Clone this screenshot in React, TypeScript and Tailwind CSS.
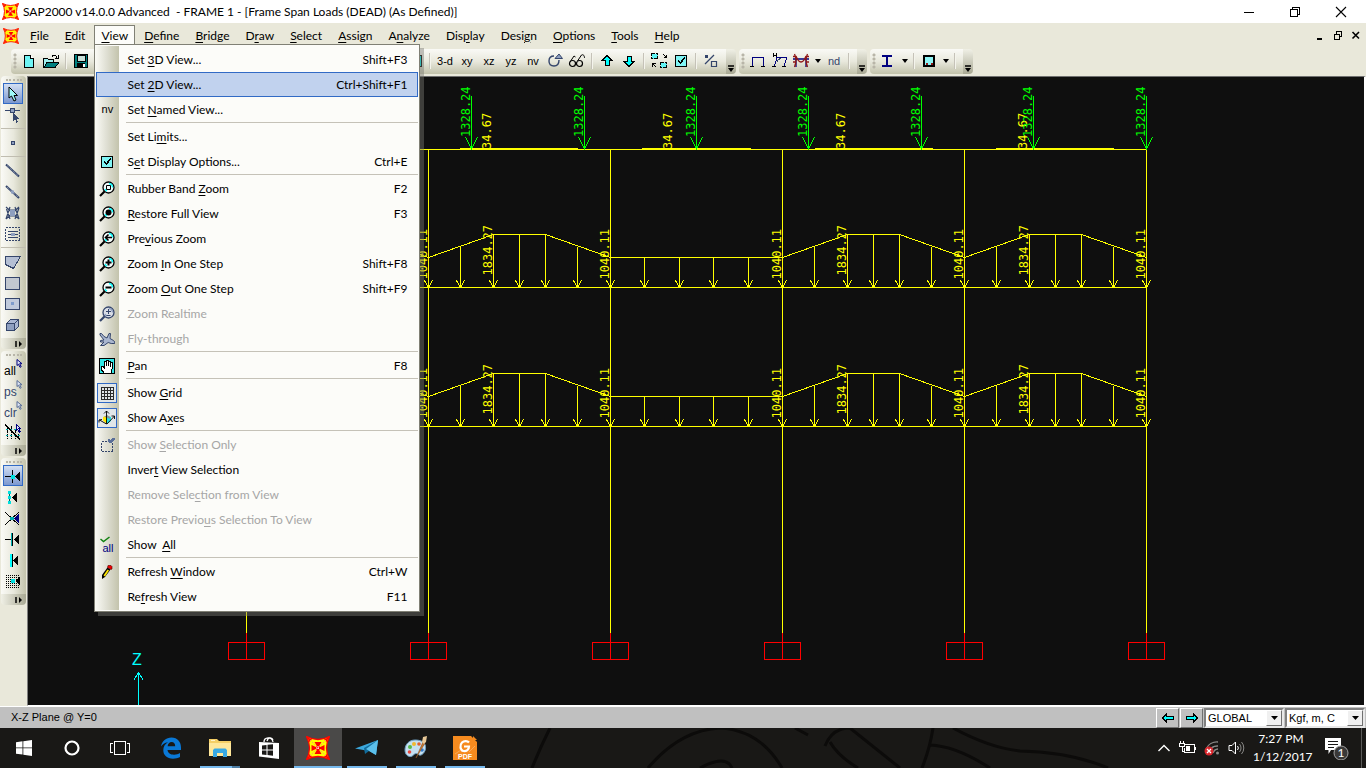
import { Fragment, ReactNode, useState } from 'react';

/* ---------- small helpers ---------- */

// "&" marks the accelerator letter
function Accel({ label }: { label: string }) {
  const i = label.indexOf('&');
  if (i < 0) return <>{label}</>;
  return (
    <>
      {label.slice(0, i)}
      <u className="underline underline-offset-2">{label[i + 1]}</u>
      {label.slice(i + 2)}
    </>
  );
}

function Svg({ size = 16, children }: { size?: number; children: ReactNode }) {
  return (
    <svg width={size} height={size} viewBox="0 0 16 16" fill="none" shapeRendering="crispEdges" className="shrink-0">
      {children}
    </svg>
  );
}

function SapLogo({ size = 16 }: { size?: number }) {
  return (
    <svg width={size} height={size} viewBox="0 0 24 24" className="shrink-0">
      <path d="M.5.5Q12 6.500 23.500.5Q17.500 12 23.500 23.500Q12 17.500 .5 23.500Q6.500 12 .5.5z" fill="#ffff00" stroke="#ff0000" strokeWidth="1.300" />
      <path d="M1 1l5 2.500L3.500 6zM23 1l-5 2.500L20.500 6zM1 23l5-2.500L3.500 18zM23 23l-5-2.500 2.500-2.500z" fill="#ff0000" />
      <path d="M8.500 6h7L12 12zM8.500 18h7L12 12zM5.500 9v6l6.500-3zM18.500 9v6L12 12z" fill="#ff0000" />
      <path d="M10 10h4v4h-4z" fill="#ff0000" />
      <path d="M4 4l16 16M20 4L4 20" stroke="#ff9070" strokeWidth="1" strokeDasharray="1.500 1.500" />
      <path d="M12 10v4M10 12h4" stroke="#fff" strokeWidth="1" strokeDasharray="1 1" />
    </svg>
  );
}

/* ---------- icons ---------- */

const NAVY = '#00007f';
const STEEL = '#34456b';
const SOFT = '#8e9fc0';

function Lens({ children, dim }: { children?: ReactNode; dim?: boolean }) {
  const c = dim ? STEEL : '#000';
  return (
    <svg width={16} height={16} viewBox="0 0 16 16" fill="none" className="shrink-0">
      <circle cx="9.500" cy="6.500" r="5.500" fill={dim ? '#d9dde6' : '#f4fbfa'} stroke={c} strokeWidth="1.300" />
      <path d="M10 2.500a4 4 0 0 1 3.500 4M6 8a4 4 0 0 0 2 2.200" stroke={dim ? SOFT : '#00ffff'} strokeWidth="1.300" />
      <path d="M5.500 10.500L1 15" stroke={c} strokeWidth="2.200" />
      {children}
    </svg>
  );
}

const checkBoxIcon = (
  <Svg>
    <rect x="3" y="3" width="11" height="11" fill="#7ff4f4" />
    <path d="M2.500 2.500h11v11h-11z" stroke="#000" />
    <path d="M5 7h1v1h1v1h1V7h1V6h1V5h1V4h1v2h-1v1h-1v2H9v1H8v1H7v-1H6V9H5z" fill="#000" />
  </Svg>
);

const nvIcon = <span className="font-['Liberation_Sans'] text-[11px] text-black">nv</span>;

const planeIcon = (
  <svg width={16} height={16} viewBox="0 0 16 16" className="shrink-0">
    <path
      d="M1 2.500h1.500L5 5.500 8 7l2-4.500h1.500L11 7.500l3.500 2 1.200 1.500v1.500h-3.500l-3-1L5 14.500H1.500L5 11H1.500V9.500L5 9 1 4z"
      fill="#a9b6cf"
      stroke={STEEL}
      strokeWidth="1"
    />
  </svg>
);

const handIcon = (
  <Svg>
    <rect x="0" y="0" width="16" height="16" fill="#000" />
    <rect x="1" y="1" width="14" height="14" fill="#30e8e8" />
    <path d="M5 15L2 11V8h1.500L5 9.500V3h2V2h2v1h2v1h2v7l-1 4z" fill="#fff" stroke="#000" strokeWidth="1" />
    <path d="M7 3v5M9 3v5M11 4v5" stroke="#000" strokeWidth="1" />
  </Svg>
);

const gridIcon = (
  <Svg>
    <path d="M2.500 2v12M5.500 2v12M8.500 2v12M11.500 2v12M14.500 2v12M2 2.500h13M2 5.500h13M2 8.500h13M2 11.500h13M2 14.500h13" stroke="#2a2a2a" />
  </Svg>
);

const axesIcon = (
  <svg width={18} height={18} viewBox="0 0 18 18" fill="none" className="shrink-0">
    <path d="M5 8l4-1.500V15l-4-3.500z" fill="#ffe800" />
    <path d="M9 6.500l4 1.500v4L9 15z" fill="#20e0e0" />
    <path d="M6 8l3-2 3 2v2L9 8.500z" fill="#909090" />
    <path d="M8.500 15V2M6 4.500L8.500 2 11 4.500M8.500 15L1.500 11M1 13.500V11l3-.5M9 15l7.500-8M13.500 7h3v3" stroke="#000" strokeWidth=".9" />
  </svg>
);

const selectionIcon = (
  <Svg>
    <path d="M2.500 4.500h11v10h-11z" stroke={STEEL} strokeDasharray="2 1" />
    <rect x="8" y="3" width="6" height="3" fill="#d9d9cc" />
    <path d="M9 3h1v1h1v1h1V4h1V3h1V2h2" stroke="#5a6f98" strokeWidth="1.500" />
  </Svg>
);

const showAllIcon = (
  <span className="relative block h-4 w-4">
    <svg width={11} height={7} viewBox="0 0 11 7" className="absolute -top-px left-px" fill="none">
      <path d="M.5 3l3 2.500 6-4.500" stroke="#108010" strokeWidth="1.500" />
    </svg>
    <span className="absolute top-[3px] left-[3px] font-['Liberation_Sans'] text-[11px] leading-4 text-[#00007f]">all</span>
  </span>
);

const pencilIcon = (
  <svg width={16} height={16} viewBox="0 0 16 16" className="shrink-0">
    <path d="M3 15V11l5.500-7.500 3 2L6 13z" fill="#000" />
    <path d="M4.500 11.500L8.500 5.500l1.500 1-4 6z" fill="#ffe800" />
    <path d="M9 1.500h3l1 1V5l-1 .5L8.500 3.500z" fill="#f00000" stroke="#500" strokeWidth=".6" />
  </svg>
);

/* ---------- View menu ---------- */

interface MenuRow {
  label?: string;
  keys?: string;
  icon?: ReactNode;
  disabled?: boolean;
  active?: boolean;
  checked?: boolean;
}

const viewMenu: MenuRow[] = [
  { label: 'Set &3D View...', keys: 'Shift+F3' },
  { label: 'Set &2D View...', keys: 'Ctrl+Shift+F1', active: true },
  { label: 'Set &Named View...', icon: nvIcon },
  {},
  { label: 'Set Li&mits...' },
  { label: 'S&et Display Options...', keys: 'Ctrl+E', icon: checkBoxIcon },
  {},
  { label: 'Rubber Band &Zoom', keys: 'F2', icon: <Lens><path d="M7.500 4.500h4v4h-4z" stroke="#000" /></Lens> },
  { label: '&Restore Full View', keys: 'F3', icon: <Lens><circle cx="9.500" cy="6.500" r="3" fill="#000" /></Lens> },
  { label: 'Pre&vious Zoom', icon: <Lens><path d="M13 6.500H7M9.500 3.500l-3 3 3 3" stroke="#000" strokeWidth="1.600" /></Lens> },
  { label: 'Zoom &In One Step', keys: 'Shift+F8', icon: <Lens><path d="M6.500 6.500h6M9.500 3.500v6" stroke="#000" strokeWidth="2" /></Lens> },
  { label: 'Zoom &Out One Step', keys: 'Shift+F9', icon: <Lens><path d="M6.500 6.500h6" stroke="#000" strokeWidth="2" /></Lens> },
  { label: 'Zoom Realtime', disabled: true, icon: <Lens dim><path d="M7 5.500h5M9.500 3v5M7.500 9.500h4" stroke={STEEL} /></Lens> },
  { label: 'Fly-through', disabled: true, icon: planeIcon },
  {},
  { label: '&Pan', keys: 'F8', icon: handIcon },
  {},
  { label: 'Show &Grid', icon: gridIcon, checked: true },
  { label: 'Show A&xes', icon: axesIcon, checked: true },
  {},
  { label: 'Show &Selection Only', disabled: true, icon: selectionIcon },
  { label: 'Inver&t View Selection' },
  { label: 'Remove Sele&ction from View', disabled: true },
  { label: 'Restore Previo&us Selection To View', disabled: true },
  { label: 'Show  &All', icon: showAllIcon },
  {},
  { label: 'Refresh &Window', keys: 'Ctrl+W', icon: pencilIcon },
  { label: 'Re&fresh View', keys: 'F11' },
];

function ViewMenu() {
  return (
    <div className="absolute top-full -left-px z-20 -mt-px w-[326px] border border-[#808075] bg-[#fcfcf9] px-px py-0.5 shadow-[4px_4px_0_rgba(120,120,112,0.45)]">
      <div className="absolute inset-y-px left-0 w-6 bg-linear-to-r from-[#fbfbf6] via-[#deded2] to-[#c3c3ac]" />
      {viewMenu.map((row, i) =>
        row.label ? (
          <button
            key={i}
            disabled={row.disabled}
            className={`relative flex h-[25px] w-full items-center border text-left whitespace-pre ${
              row.active ? 'border-[#316ac5] bg-[#c1d2ee]' : 'border-transparent'
            } ${row.disabled ? 'text-[#a6a6a6]' : 'text-black'}`}
          >
            <span
              className={`flex h-5 w-5 shrink-0 items-center justify-center ${
                row.checked ? 'border border-[#316ac5] bg-[#e1e6e8]' : ''
              }`}
            >
              {row.icon}
            </span>
            <span className="ml-2.5 flex-1"><Accel label={row.label} /></span>
            <span className="mr-2.5">{row.keys}</span>
          </button>
        ) : (
          <div key={i} className="ml-[30px] h-0.5 border-t border-[#c5c2b8]" />
        )
      )}
    </div>
  );
}

/* ---------- title and menu bars ---------- */

function WindowButtons() {
  return (
    <div className="flex">
      <button aria-label="Minimize" className="flex h-5 w-[46px] items-center justify-center">
        <Svg><path d="M3 8.500h10" stroke="#000" /></Svg>
      </button>
      <button aria-label="Restore" className="flex h-5 w-[46px] items-center justify-center">
        <Svg><path d="M3.500 5.500h7v7h-7zM5.500 5.500v-2h7v7h-2" stroke="#000" /></Svg>
      </button>
      <button aria-label="Close" className="flex h-5 w-[46px] items-center justify-center">
        <svg width="16" height="16" viewBox="0 0 16 16"><path d="M3 3l10 10M13 3L3 13" stroke="#000" strokeWidth="1.100" /></svg>
      </button>
    </div>
  );
}

function TitleBar() {
  return (
    <header className="flex h-[23px] items-center bg-white pr-0.5 pl-0.5">
      <SapLogo size={17} />
      <h1 className="ml-1 flex-1 whitespace-pre">SAP2000 v14.0.0 Advanced  - FRAME 1 - [Frame Span Loads (DEAD) (As Defined)]</h1>
      <WindowButtons />
    </header>
  );
}

const menus = ['&File', '&Edit', '&View', '&Define', '&Bridge', 'D&raw', '&Select', '&Assign', 'A&nalyze', 'Dis&play', 'Desi&gn', '&Options', '&Tools', '&Help'];

function MenuBar() {
  const [open, setOpen] = useState('&View');
  return (
    <nav className="flex h-[23px] items-end pl-[3px]">
      <div className="flex h-[21px] items-center"><SapLogo size={16} /></div>
      <div className="ml-1 flex flex-1 gap-0.5">
        {menus.map((m) => (
          <div
            key={m}
            className={`relative flex h-[21px] items-center border px-1.5 ${
              m === open ? 'border-[#808075] border-b-transparent bg-[#fcfcf9]' : 'border-transparent'
            }`}
          >
            <button onClick={() => setOpen(m)}><Accel label={m} /></button>
            {m === '&View' && open === m && <ViewMenu />}
          </div>
        ))}
      </div>
      <div className="flex h-[21px] items-center gap-0.5 pr-0.5">
        <button aria-label="Minimize frame"><Svg><path d="M5 11h5" stroke="#000" strokeWidth="2" /></Svg></button>
        <button aria-label="Restore frame">
          <Svg><path d="M4.500 6.500h5v5h-5zM6.500 6V3.500h5v5H10M4 6h6M6 3h6" stroke="#000" /></Svg>
        </button>
        <button aria-label="Close frame">
          <svg width="16" height="16" viewBox="0 0 16 16"><path d="M4.500 4l6.500 6.500M11 4L4.500 10.500" stroke="#000" strokeWidth="1.600" /></svg>
        </button>
      </div>
    </nav>
  );
}

/* ---------- top toolbar ---------- */

function Tool({ children, label }: { children: ReactNode; label: string }) {
  return (
    <button aria-label={label} className="flex h-6 w-[22px] shrink-0 items-center justify-center">
      {children}
    </button>
  );
}

const Sep = () => <div className="mx-[3px] h-4 w-0.5 shrink-0 border-l border-[#c5c2b8] bg-[#f4f4ec]" />;

const Caret = () => (
  <button aria-label="More" className="flex h-6 w-[11px] shrink-0 items-center justify-center">
    <svg width="6" height="4" viewBox="0 0 6 4"><path d="M0 0h6L3 4z" fill="#000" /></svg>
  </button>
);

function Strip({ children }: { children: ReactNode }) {
  return (
    <div className="flex h-[25px] shrink-0">
      <div className="flex items-center rounded-l-sm bg-linear-to-b from-[#fafaf6] via-[#e8e8dc] to-[#c2c2ab] pr-1">
        <div className="ml-0.5 h-4 w-[5px] shrink-0 bg-[radial-gradient(circle,#b8b5a8_1px,transparent_2px)] bg-[length:4px_4px] bg-repeat-y" />
        {children}
      </div>
      <div className="flex w-2.5 items-end justify-center rounded-r-sm bg-linear-to-b from-[#f0f0e6] to-[#a9a994] pb-0.5">
        <svg width="6" height="7" viewBox="0 0 6 7"><path d="M0 1h6" stroke="#000" strokeWidth="1.500" /><path d="M0 3h6L3 7z" fill="#000" /></svg>
      </div>
    </div>
  );
}

const Word = ({ children, dim }: { children: string; dim?: boolean }) => (
  <span className={`font-['Liberation_Sans'] text-[11px] ${dim ? 'text-[#34456b]' : 'text-black'}`}>{children}</span>
);

function ToolBar() {
  return (
    <div className="flex h-[30px] items-center gap-[3px] pl-[11px]">
      <Strip>
        <Tool label="New"><Svg><path d="M3.500 2.500h6l3 3v9h-9z" fill="#6ff4f4" stroke="#000" /><path d="M9.500 2.500v3h3" fill="#fff" stroke="#000" /></Svg></Tool>
        <Tool label="Open">
          <Svg><path d="M0.500 14.500v-9h4l1 1h5v3" fill="#a0f0f0" stroke="#000" /><path d="M1 14.500l3-5h12l-4 5z" fill="#008080" stroke="#000" /><path d="M9 3.500c2-2 4-2 5 1M15 2v3h-3" stroke="#000" /></Svg>
        </Tool>
        <Sep />
        <Tool label="Save"><Svg><path d="M1.500 1.500h13v13h-13z" fill="#008080" stroke="#000" /><path d="M4 2h8v6H4z" fill="#c8e0d8" stroke="#000" /><path d="M4 10h8v5H4z" fill="#000" /><path d="M9.500 11h2V14h-2z" fill="#fff" /></Svg></Tool>
        <div className="w-[312px]" />
        <Tool label="Select view"><Svg><path d="M2.500 2.500h12v11h-12z" fill="#00e8e8" stroke="#000" /></Svg></Tool>
        <Sep />
        <Tool label="3-d view"><Word>3-d</Word></Tool>
        <Tool label="xy view"><Word>xy</Word></Tool>
        <Tool label="xz view"><Word>xz</Word></Tool>
        <Tool label="yz view"><Word>yz</Word></Tool>
        <Tool label="Named view"><Word>nv</Word></Tool>
        <Tool label="Rotate"><svg width="16" height="16" viewBox="0 0 16 16" fill="none"><path d="M7 3C4 3 2 5 2 8s2 5 5 5 5-2 5-6" stroke={STEEL} strokeWidth="1.400" /><path d="M8 5.500L12 1l3.500 4.500z" fill={SOFT} stroke={STEEL} /></svg></Tool>
        <Tool label="Perspective"><svg width="18" height="16" viewBox="0 0 18 16" fill="none"><circle cx="4.500" cy="10.500" r="3" stroke="#000" strokeWidth="1.200" /><circle cx="11.500" cy="10.500" r="3" stroke="#000" strokeWidth="1.200" /><path d="M7.500 10h1M2 9l4-6 1.500 1M9.500 8l4-6c2-1 3 1 3 3" stroke="#000" /></svg></Tool>
        <Sep />
        <Tool label="Up"><Svg><path d="M8 2.500l5 5h-3v5H6v-5H3z" fill="#00ffff" stroke="#000" /></Svg></Tool>
        <Tool label="Down"><Svg><path d="M8 13.500l5-5h-3v-5H6v5H3z" fill="#00ffff" stroke="#000" /></Svg></Tool>
        <Sep />
        <Tool label="Shrink objects">
          <Svg>
            <path d="M.5 .5h6v5h-6zM9.500 9.500h6v5h-6z" fill="#5ff4f4" stroke="#000" strokeDasharray="3 1" />
            <path d="M12 1l3 3M15.500 1.500v3h-3M5 14l-3-3M1.500 13.500v-3h3" stroke="#000" />
          </Svg>
        </Tool>
        <Tool label="Display options">{checkBoxIcon}</Tool>
        <Sep />
        <Tool label="Assign"><svg width="16" height="16" viewBox="0 0 16 16" fill="none"><path d="M2 11L11 2" stroke={STEEL} strokeWidth="1.300" /><rect x="2" y="2" width="3" height="3" fill={STEEL} /><path d="M8.500 8.500h5v5h-5z" stroke={STEEL} strokeWidth="1.200" /></svg></Tool>
      </Strip>
      <Strip>
        <Tool label="Frame"><Svg><path d="M3 13V4h11v9" stroke={NAVY} strokeWidth="1" /><path d="M1 13.500h4M12 13.500h4" stroke="#000" /></Svg></Tool>
        <Tool label="Deformed"><Svg><path d="M3.500 13L6 4.500h10L13 13" stroke={NAVY} /><path d="M6 9c1-3 3-3 4-4" stroke={STEEL} /><path d="M2 0v4M5 0v4M2 2h3M1 13.500h4M11 13.500h4" stroke="#000" /></Svg></Tool>
        <Tool label="Forces"><svg width="16" height="16" viewBox="0 0 16 16" fill="none"><path d="M0 6h16M3 5v9M13 5v9" stroke={NAVY} strokeWidth="1.300" /><path d="M1.500 1c2 4 2 8 0 13M14.500 1c-2 4-2 8 0 13M3 3c3 8 7 8 10 0M0 3.500h3M13 3.500h3M0 9h3M13 9h3" stroke="#901818" strokeWidth="1.300" /></svg></Tool>
        <Caret />
        <Tool label="nd"><Word dim>nd</Word></Tool>
        <Sep />
      </Strip>
      <Strip>
        <Tool label="Steel design"><Svg><path d="M2 3h10M2 13h10" stroke={NAVY} strokeWidth="2" /><path d="M7 3v10" stroke={NAVY} strokeWidth="2" /></Svg></Tool>
        <Caret />
        <Sep />
        <Tool label="Concrete design"><Svg><path d="M3 3h10v10H3z" fill="#90f4f4" stroke="#000" strokeWidth="1.500" /><path d="M5 10.500h2M10 10.500h2" stroke="#901818" strokeWidth="2" /></Svg></Tool>
        <Caret />
        <Sep />
      </Strip>
    </div>
  );
}

/* ---------- left toolbars ---------- */

const CursorTip = ({ color }: { color: string }) => (
  <path d="M11 .5v6l1.500-1.200 1.500 3 1.200-.6-1.500-3H16z" stroke={color} fill="#dfe6f4" strokeWidth="1" />
);

function PickText({ text, color, tip }: { text: string; color: string; tip: string }) {
  return (
    <span className="relative block h-5 w-[18px]">
      <span className={`absolute bottom-0 left-0 font-['Liberation_Sans'] text-xs leading-4 ${color}`}>{text}</span>
      <svg width={17} height={16} viewBox="0 0 17 16" fill="none" className="absolute top-0 left-0.5"><CursorTip color={tip} /></svg>
    </span>
  );
}

const sideGroups: { name: string; icon?: ReactNode; on?: boolean }[][] = [
  [
    { name: 'Pointer', on: true, icon: <svg width="16" height="16" viewBox="0 0 16 16"><path d="M4 1v11l2.500-2 2.500 5 2-1-2-4.500h3.500z" fill="#9ffafa" stroke="#000" /></svg> },
    { name: 'Reshape', icon: <Svg><path d="M0 3.500h15" stroke={STEEL} /><path d="M5.500 1.500h4v4h-4z" fill={SOFT} stroke={STEEL} /><path d="M8 6v8l2-2 1.500 4 1.500-1-1.500-3.500h2z" fill={STEEL} /></Svg> },
    { name: '' },
    { name: 'Joint', icon: <Svg><path d="M6.500 6.500h3v3h-3z" fill={SOFT} stroke={STEEL} /></Svg> },
    { name: '' },
    { name: 'Frame', icon: <svg width="16" height="16" viewBox="0 0 16 16"><path d="M1 1.500l13 12" stroke={STEEL} strokeWidth="2" /><path d="M2 2.500l11 10" stroke="#d0d6e2" strokeWidth=".7" strokeDasharray="1 1" /></svg> },
    { name: 'Quick frame', icon: <svg width="16" height="16" viewBox="0 0 16 16"><path d="M1 2l13 12" stroke={STEEL} strokeWidth="2" /><path d="M2 3l11 10" stroke="#d0d6e2" strokeWidth=".7" strokeDasharray="1 1" /><rect x="6" y="6.500" width="3" height="3" fill={SOFT} /></svg> },
    { name: 'Braces', icon: <svg width="16" height="16" viewBox="0 0 16 16" fill="none"><path d="M1 2l13 12M14 2L1 14M1 14L5 2M5 14L1.500 4M10 2l4 12M14 3l-4 11M4 5h7M4 11h7" stroke={STEEL} strokeWidth="1.200" /><rect x="5" y="5" width="5" height="6" fill={SOFT} /></svg> },
    { name: 'Secondary', icon: <Svg><path d="M.5 1.500h14v13H.5z" stroke={STEEL} strokeDasharray="2 1" /><path d="M3 5.500h10M3 8.500h10M3 11.500h10" stroke={STEEL} /><rect x="6" y="7" width="4" height="3" fill={SOFT} /></Svg> },
    { name: '' },
    { name: 'Poly area', icon: <Svg><path d="M.5 2.500h15l-4 7-3 5-8-4z" fill="#b4bfd4" stroke={STEEL} /></Svg> },
    { name: 'Rect area', icon: <Svg><path d="M.5 2.500h14v12H.5z" fill="#c2c8d0" stroke={STEEL} /></Svg> },
    { name: 'Quick area', icon: <Svg><path d="M.5 2.500h14v11H.5z" fill="#c0cadc" stroke={STEEL} /><rect x="6" y="6" width="3" height="3" fill="#7e9ccc" /></Svg> },
    { name: 'Solid', icon: <Svg><path d="M1.500 6.500h8v7h-8z" fill={SOFT} stroke={STEEL} /><path d="M1.500 6.500l4-4h8l-4 4zM9.500 13.500l4-4v-7l-4 4z" fill="#a9b6d2" stroke={STEEL} /></Svg> },
  ],
  [
    { name: 'Select all', icon: <PickText text="all" color="text-black" tip={NAVY} /> },
    { name: 'Previous selection', icon: <PickText text="ps" color="text-[#34456b]" tip="#5a6f98" /> },
    { name: 'Clear selection', icon: <PickText text="clr" color="text-[#34456b]" tip="#5a6f98" /> },
    { name: 'Intersecting line', icon: <Svg><path d="M2.500 2v13M6.500 2v13M10.500 6v9M13.500 10v5" stroke="#000" strokeDasharray="3 1" /><path d="M1 5.500h14M1 11.500h14" stroke="#00b0b0" strokeDasharray="2 2" /><path d="M0 1l15 14" stroke="#000" strokeWidth="1.500" /><CursorTip color={NAVY} /></Svg> },
  ],
  [
    { name: 'Snap points', on: true, icon: <Svg><path d="M0 8.500h14M7.500 2v13" stroke="#000" /><rect x="6" y="7" width="4" height="4" fill="#00e0e0" /><path d="M15 4v9l-5-4.500z" fill="#000" /></Svg> },
    { name: 'Snap ends', icon: <Svg><path d="M4.500 2v13" stroke="#006060" /><path d="M3 2h3v3H3zM3 7h3v3H3zM3 12h3v3H3z" fill="#00e0e0" /><path d="M12 4v9L7 8.500z" fill="#000" /></Svg> },
    { name: 'Snap intersections', icon: <Svg><path d="M0 2l14 13M14 2L0 15" stroke="#000" /><rect x="5" y="7" width="4" height="3" fill="#00b0b0" /><path d="M14 4v9L9 8.500z" fill={NAVY} /></Svg> },
    { name: 'Snap perpendicular', icon: <Svg><path d="M0 8.500h7" stroke="#000" /><path d="M6.500 2v13" stroke="#00b0b0" /><path d="M7.500 2v13" stroke="#000" /><path d="M14 4v9L9 8.500z" fill="#000" /></Svg> },
    { name: 'Snap lines', icon: <Svg><path d="M6 2v13" stroke="#00ffff" strokeWidth="2" /><path d="M7.500 2v13" stroke="#000" /><path d="M13 4v9L8 8.500z" fill="#000" /></Svg> },
    { name: 'Snap grid', icon: <Svg><path d="M1 2.500h14M1 4.500h14M1 6.500h14M1 8.500h14M1 10.500h14M1 12.500h14M1 14.500h14" stroke="#000" strokeDasharray="1 1" /><rect x="6" y="6" width="4" height="4" fill="#00e0e0" /><path d="M15 4v8l-5-4z" fill="#000" /></Svg> },
  ],
];

function SideBar() {
  return (
    <aside className="flex w-[27px] shrink-0 flex-col items-start gap-0.5 pl-px">
      {sideGroups.map((group, g) => (
        <div key={g} className="w-[25px]">
          <div className="rounded-t-sm bg-linear-to-r from-[#fafaf6] via-[#e8e8dc] to-[#c2c2ab] pb-[3px]">
            <div className="flex h-[7px] items-center justify-center">
              <div className="h-0.5 w-4 border-t-2 border-dotted border-[#b8b5a8]" />
            </div>
            {group.map((item, i) =>
              item.name ? (
                <button
                  key={i}
                  aria-label={item.name}
                  className={`ml-0.5 flex h-[21px] w-5 items-center justify-center border ${
                    item.on ? 'border-[#316ac5] bg-linear-to-b from-[#d3dff2] to-[#7c98cf]' : 'border-transparent'
                  }`}
                >
                  {item.icon}
                </button>
              ) : (
                <div key={i} className="h-[7px] py-[3px]"><div className="h-px bg-[#c0bdb0]" /></div>
              )
            )}
          </div>
          <div className="flex h-[11px] items-center justify-end rounded-b-sm bg-linear-to-r from-[#f0f0e6] to-[#a9a994] pr-1">
            <svg width="7" height="6" viewBox="0 0 7 6"><path d="M1 0v6" stroke="#000" strokeWidth="1.500" /><path d="M4 0v6l3-3z" fill="#000" /></svg>
          </div>
        </div>
      ))}
    </aside>
  );
}

/* ---------- model view ---------- */

const columns = [246.5, 428.5, 610.5, 782.5, 964.5, 1146.5];
const floors = [287.5, 426.5];
const pointLoads = [246.5, 359.5, 471.5, 584.5, 696.5, 808.5, 921.5, 1033.5, 1146.5];
const roofLoads = [
  { from: 278, to: 396, label: 310 },
  { from: 460, to: 578, label: 492 },
  { from: 642, to: 751, label: 673 },
  { from: 815, to: 933, label: 846 },
  { from: 996, to: 1114, label: 1028 },
];

function Label({ x, y, color, children }: { x: number; y: number; color: string; children: string }) {
  return (
    <text transform={`translate(${x - 1} ${y}) rotate(-90)`} fill={color} fontSize={12} fontFamily="DejaVu Sans Mono, monospace">
      {children}
    </text>
  );
}

function SpanLoad({ x, width, y, flat }: { x: number; width: number; y: number; flat: boolean }) {
  const low = y - 30;
  const mid = y - 41;
  const high = y - 53;
  const arrows = flat
    ? [34, 69, 103, 138].map((dx) => [x + dx, low])
    : [[x + 32, mid], [x + 65, high], [x + 91, high], [x + 117, high], [x + 149, mid]];
  const ends = [[x, low], [x + width, low]];
  const top = flat
    ? `M${x} ${low}h${width}`
    : `M${x} ${low}L${x + 65} ${high}h52L${x + width} ${low}`;
  return (
    <g stroke="#ffff00">
      <path d={top} />
      {[...arrows, ...ends].map(([ax, ay]) => (
        <path key={ax} d={`M${ax} ${ay}V${y}M${ax - 4} ${y - 7}L${ax} ${y}L${ax + 4} ${y - 7}`} />
      ))}
    </g>
  );
}

function ModelView() {
  return (
    <main className="min-w-0 flex-1 overflow-hidden border-t border-r-2 border-b border-l border-t-[#707070] border-r-white border-b-white border-l-[#808080] bg-[#0f0f0f]">
      <svg width={1336} height={628} viewBox="28 77 1336 628" fill="none" shapeRendering="crispEdges" className="block">
        {columns.map((x) => (
          <Fragment key={x}>
            <path d={`M${x} 149V633`} stroke="#ffff00" />
            <path d={`M${x} 633V659M${x - 18} 642.500h36v17h-36z`} stroke="#ff0000" />
          </Fragment>
        ))}
        <path d="M246 149.500H1147M246 287.500H1147M246 426.500H1147" stroke="#ffff00" />

        {roofLoads.map((r) => (
          <Fragment key={r.from}>
            <path d={`M${r.from} 148.500H${r.to}`} stroke="#ffff00" />
            <Label x={r.label} y={149} color="#ffff00">34.67</Label>
          </Fragment>
        ))}
        {pointLoads.map((x) => (
          <Fragment key={x}>
            <path d={`M${x} 96V149M${x - 6} 137L${x} 149L${x + 6} 137`} stroke="#00ff00" />
            <Label x={x - 1} y={137} color="#00ff00">1328.24</Label>
          </Fragment>
        ))}

        {floors.map((y) =>
          columns.slice(0, -1).map((x, i) => {
            const width = columns[i + 1] - x;
            return (
              <Fragment key={x}>
                <SpanLoad x={x} width={width} y={y} flat={i === 2} />
                {i !== 2 && <Label x={x + 64} y={y - 12} color="#ffff00">1834.27</Label>}
                <Label x={x + width - 1} y={y - 8} color="#ffff00">1040.11</Label>
              </Fragment>
            );
          })
        )}

        <path d="M138.500 705V672M133.500 680.500l5-8 5 8" stroke="#00ffff" />
        <text x={132} y={665} fill="#00ffff" fontSize={16} fontFamily="Liberation Sans, sans-serif">Z</text>
      </svg>
    </main>
  );
}

/* ---------- status bar ---------- */

function Combo({ label, value }: { label: string; value: string }) {
  return (
    <div className="relative h-5 w-20 border-2 border-t-[#808080] border-r-[#e8e8e8] border-b-[#e8e8e8] border-l-[#808080] bg-white">
      <select aria-label={label} className="block h-4 w-full appearance-none pl-0.5 leading-4 outline-none">
        <option>{value}</option>
      </select>
      <span className="pointer-events-none absolute top-0 right-0 flex h-4 w-4 items-center justify-center border border-t-white border-r-[#707070] border-b-[#707070] border-l-white bg-[#f0f0f0]">
        <svg width="7" height="4" viewBox="0 0 7 4"><path d="M0 0h7L3.500 4z" fill="#000" /></svg>
      </span>
    </div>
  );
}

function StatusBar() {
  const key = 'flex h-5 w-[23px] items-center justify-center border border-t-white border-r-[#707070] border-b-[#707070] border-l-white bg-[#c0c0c0]';
  return (
    <footer className="flex h-[22px] items-center gap-px border-t border-white bg-[#c0c0c0] pr-px pl-[11px] font-['Liberation_Sans'] text-[11px]">
      <span className="flex-1">X-Z Plane @ Y=0</span>
      <button aria-label="Previous" className={key}>
        <Svg><path d="M2.500 8l4-4v2.500h7v3h-7V12z" fill="#00ffff" stroke="#000" /></Svg>
      </button>
      <button aria-label="Next" className={key}>
        <Svg><path d="M13.500 8l-4-4v2.500h-7v3h7V12z" fill="#00ffff" stroke="#000" /></Svg>
      </button>
      <Combo label="Coordinate system" value="GLOBAL" />
      <Combo label="Units" value="Kgf, m, C" />
    </footer>
  );
}

/* ---------- taskbar ---------- */

const apps: { name: string; state: 'idle' | 'open' | 'multi' | 'active'; icon: ReactNode }[] = [
  {
    name: 'Edge',
    state: 'idle',
    icon: <svg width="22" height="22" viewBox="0 0 22 22"><path d="M1 9.500C2 4 6 .5 11.500.5c6 0 9.500 4.500 9.500 10V13H7.500c.3 3 3 4.700 6.500 4.700 2.300 0 4.300-.6 6-1.600v4c-2 1-4.500 1.600-7 1.600-6 0-9.700-3.300-9.700-8.700 0-3.200 1.700-6 4.700-7.700C4.500 5.700 2.500 7.200 1 9.500zM7.600 9.300h7.600c0-2.500-1.200-4.300-3.600-4.300-2.200 0-3.700 1.800-4 4.300z" fill="#0a78d6" /></svg>,
  },
  {
    name: 'File Explorer',
    state: 'multi',
    icon: <svg width="22" height="20" viewBox="0 0 22 20"><path d="M0 1h8l2 2h12v15H0z" fill="#f5cf66" /><path d="M1 5h21v13H0V5z" fill="#ffe79a" /><path d="M4 19v-7l1.500-1.500h11L18 12v7h-4v-4H8v4z" fill="#38a9e4" /><path d="M2 2h4v1H2z" fill="#fff3c8" /></svg>,
  },
  {
    name: 'Store',
    state: 'idle',
    icon: <svg width="22" height="24" viewBox="0 0 22 24" fill="none"><path d="M6 6c0-5 8-6 9 0M9 5c1-4 5-4 6-1" stroke="#fff" strokeWidth="1.300" /><path d="M1 6l20 1v16L1 20.500z" fill="#fff" /><path d="M4 9.500l4.500-.5v4.500H4zM9.500 8.800l5.500-.6v5.300H9.500zM4 14.500h4.500V19L4 18.500zM9.500 14.500H15v5.300l-5.500-.7z" fill="#1a1917" /></svg>,
  },
  { name: 'SAP2000', state: 'active', icon: <SapLogo size={24} /> },
  {
    name: 'Direct',
    state: 'open',
    icon: <svg width="24" height="18" viewBox="0 0 24 18"><path d="M0 9.500L23 1l-2 15-7-4z" fill="#3ba7dc" /><path d="M23 1L9 9l1 6 4-3z" fill="#126c9c" /><path d="M23 1L11 10l10 6z" fill="#5cc0ec" /></svg>,
  },
  {
    name: 'Paint',
    state: 'open',
    icon: <svg width="24" height="24" viewBox="0 0 24 24"><path d="M11 4C5 4 1 8.500 1 14c0 4.500 3 7 6 6.500 3-.5 2.500-3 5-3s3 3 6 1c2.500-1.700 4-5 3.500-8C21 6 17 4 11 4z" fill="#c5dff0" stroke="#6e9fc0" /><circle cx="6" cy="11" r="2" fill="#58b848" /><circle cx="10" cy="8" r="2" fill="#f0b830" /><circle cx="15" cy="8" r="1.800" fill="#e06030" /><circle cx="5.500" cy="16" r="1.800" fill="#e8483c" /><circle cx="18" cy="14" r="1.800" fill="#3078c8" /><path d="M12 22l7-16 2 1z" fill="#c87830" stroke="#8a5020" strokeWidth=".6" /><path d="M18 6l1-5 4-1-1 6-2 2z" fill="#e8c898" /></svg>,
  },
  {
    name: 'PDF',
    state: 'open',
    icon: (
      <span className="relative block h-6 w-6 bg-[#f68b1f] text-center">
        <svg width="24" height="24" viewBox="0 0 24 24" fill="none" className="absolute inset-0"><path d="M18 0h6v6z" fill="#1a1917" /><path d="M20 0v4h4z" fill="#f68b1f" /><path d="M16 6.500c-1.500-1.800-5-2-7 0-2.500 2.500-2 8 1.500 8.500 3 .4 5.500-1.500 5.500-4.500h-5" stroke="#fff" strokeWidth="2.200" /><path d="M2 18l6-4M16 16l6-6" stroke="#fbb36b" strokeWidth=".8" /></svg>
        <span className="absolute inset-x-0 bottom-0 font-['Liberation_Sans'] text-[7px] leading-[7px] font-bold text-white">PDF</span>
      </span>
    ),
  },
];

function TaskBar() {
  return (
    <div className="relative flex h-10 items-center overflow-hidden bg-[#191816] text-white">
      {/* wallpaper lines that show through the bar */}
      <svg width="640" height="40" viewBox="480 728 640 40" fill="none" className="pointer-events-none absolute inset-y-0 left-[480px]">
        <path
          d="M550 728Q540 748 532 768M648 768Q680 730 720 728Q760 730 782 768M700 768Q726 754 732 768M795 728l13 7M825 746Q832 728 850 728L900 768M830 742Q838 756 858 768M933 728Q930 748 922 768M930 745Q956 746 990 768M953 728Q990 748 1020 751Q1070 752 1108 768"
          stroke="#0c0b0a"
          strokeWidth="3"
        />
      </svg>
      <button aria-label="Start" className="flex h-10 w-12 items-center justify-center">
        <svg width="16" height="16" viewBox="0 0 16 16"><path d="M0 2.200l6.500-.9v6.200H0zM7.300 1.200L16 0v7.500H7.300zM0 8.300h6.500v6.300L0 13.700zM7.300 8.300H16V16l-8.700-1.200z" fill="#fff" /></svg>
      </button>
      <button aria-label="Search" className="flex h-10 w-12 items-center justify-center">
        <svg width="16" height="16" viewBox="0 0 16 16"><circle cx="8" cy="8" r="6.500" fill="none" stroke="#fff" strokeWidth="2.200" /></svg>
      </button>
      <button aria-label="Task view" className="flex h-10 w-12 items-center justify-center">
        <svg width="20" height="16" viewBox="0 0 20 16" fill="none" shapeRendering="crispEdges"><path d="M4.500 1.500h11v13h-11zM3 3.500H.5v9H3M17 3.500h2.500v9H17" stroke="#fff" /></svg>
      </button>
      <div className="ml-[3px] flex flex-1 gap-px">
        {apps.map((app) => (
          <button
            key={app.name}
            aria-label={app.name}
            className={`relative flex h-10 w-12 items-center justify-center ${app.state === 'active' ? 'bg-[#4a4948]' : ''}`}
          >
            {app.icon}
            {app.state === 'active' && <span className="absolute inset-x-0 bottom-0 h-0.5 bg-[#76b9ed]" />}
            {app.state === 'open' && <span className="absolute inset-x-1 bottom-0 h-0.5 bg-[#76b9ed]" />}
            {app.state === 'multi' && <span className="absolute inset-x-1 bottom-0 h-0.5 border-r-8 border-[#4d7da3] bg-[#76b9ed]" />}
          </button>
        ))}
      </div>
      <div className="flex items-center gap-2">
        <svg width="14" height="16" viewBox="0 0 14 16" fill="none"><path d="M1.500 11L7 5.500l5.500 5.500" stroke="#fff" strokeWidth="1.400" /></svg>
        <svg width="17" height="16" viewBox="0 0 17 16" fill="none" shapeRendering="crispEdges"><path d="M6 4.500h9.500v8H5.500V8M16 7v3" stroke="#fff" /><path d="M7 6h4v5H7z" fill="#fff" /><path d="M1.500 1v2M4.500 1v2M.5 3.500h5v3h-5zM3 7v4.500h3" stroke="#fff" /></svg>
        <svg width="16" height="16" viewBox="0 0 16 16" fill="none"><path d="M2 9A12 12 0 0 1 14 2M5 12a9 9 0 0 1 9-6M9 13a6 6 0 0 1 5-4" stroke="#8a8a88" strokeWidth="1.300" /><circle cx="13.500" cy="13" r="1.500" fill="#8a8a88" /><circle cx="5" cy="11" r="4.500" fill="#d9262c" /><path d="M3 9l4 4M7 9l-4 4" stroke="#fff" strokeWidth="1.300" /></svg>
        <svg width="17" height="16" viewBox="0 0 17 16" fill="none"><path d="M1 5.500h3l3.500-3.500v12L4 10.500H1z" stroke="#fff" /><path d="M9.500 6a3 3 0 0 1 0 4" stroke="#fff" /><path d="M11.500 4a6 6 0 0 1 0 8M13.500 2a9 9 0 0 1 0 12" stroke="#8a8a88" /></svg>
      </div>
      <div className="ml-2 w-14 text-center leading-[18px]">
        <div>7:27 PM</div>
        <div>1/12/2017</div>
      </div>
      <button aria-label="Notifications" className="relative ml-4 h-6 w-6">
        <svg width="24" height="24" viewBox="0 0 24 24" fill="none" className="absolute inset-0"><path d="M0 2h16v12H6l-2.500 4V14H0z" fill="#fff" /><path d="M3 5.500h10M3 8.500h10M3 11.500h6" stroke="#191816" /><circle cx="16" cy="17" r="7" fill="#3a3938" stroke="#a0a0a0" /></svg>
        <span className="absolute top-[9px] left-2 w-4 text-center text-xs leading-4">1</span>
      </button>
      <div className="ml-3 h-10 w-[5px] border-l border-[#5a5a58]" />
    </div>
  );
}

export default function App() {
  return (
    <div className="flex h-screen flex-col overflow-hidden bg-[#e9e8da] font-['Lato',sans-serif] text-xs text-black">
      <TitleBar />
      <MenuBar />
      <ToolBar />
      <div className="flex min-h-0 flex-1">
        <SideBar />
        <ModelView />
      </div>
      <StatusBar />
      <TaskBar />
    </div>
  );
}
